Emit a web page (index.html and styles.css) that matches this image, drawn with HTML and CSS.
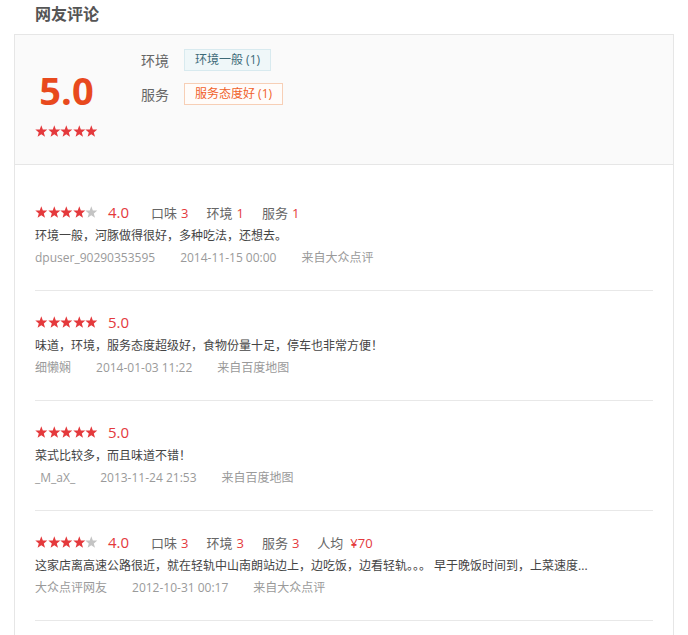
FILE: index.html
```html
<!DOCTYPE html>
<html lang="zh-CN">
<head>
<meta charset="utf-8">
<title>网友评论</title>
<link rel="stylesheet" href="styles.css">
</head>
<body>
<svg class="defs" width="0" height="0" aria-hidden="true">
  <defs>
    <symbol id="star" viewBox="0 2 100 91">
      <polygon points="50,2 62.34,35.01 97.55,36.55 69.97,58.49 79.39,92.45 50,73 20.61,92.45 30.03,58.49 2.45,36.55 37.66,35.01"/>
    </symbol>
  </defs>
</svg>
<div class="page">
  <h2 class="title">网友评论</h2>
  <div class="box">
    <div class="summary">
      <div class="score-col">
        <div class="score">5.0</div>
        <div class="stars">
          <svg class="star on"><use href="#star"/></svg><svg class="star on"><use href="#star"/></svg><svg class="star on"><use href="#star"/></svg><svg class="star on"><use href="#star"/></svg><svg class="star on"><use href="#star"/></svg>
        </div>
      </div>
      <div class="tags">
        <div class="tag-row"><span class="tag-label">环境</span><span class="tag tag-blue">环境一般 (1)</span></div>
        <div class="tag-row"><span class="tag-label">服务</span><span class="tag tag-orange">服务态度好 (1)</span></div>
      </div>
    </div>
    <ul class="reviews">
      <li class="review">
        <div class="r-head">
          <div class="stars">
            <svg class="star on"><use href="#star"/></svg><svg class="star on"><use href="#star"/></svg><svg class="star on"><use href="#star"/></svg><svg class="star on"><use href="#star"/></svg><svg class="star off"><use href="#star"/></svg>
          </div>
          <span class="r-score">4.0</span>
          <span class="dim">口味<span class="dim-val">3</span></span>
          <span class="dim">环境<span class="dim-val">1</span></span>
          <span class="dim">服务<span class="dim-val">1</span></span>
        </div>
        <p class="r-text">环境一般，河豚做得很好，多种吃法，还想去。</p>
        <div class="r-meta"><span>dpuser_90290353595</span><span>2014-11-15 00:00</span><span>来自大众点评</span></div>
      </li>
      <li class="review">
        <div class="r-head">
          <div class="stars">
            <svg class="star on"><use href="#star"/></svg><svg class="star on"><use href="#star"/></svg><svg class="star on"><use href="#star"/></svg><svg class="star on"><use href="#star"/></svg><svg class="star on"><use href="#star"/></svg>
          </div>
          <span class="r-score">5.0</span>
        </div>
        <p class="r-text">味道，环境，服务态度超级好，食物份量十足，停车也非常方便！</p>
        <div class="r-meta"><span>细懒娴</span><span>2014-01-03 11:22</span><span>来自百度地图</span></div>
      </li>
      <li class="review">
        <div class="r-head">
          <div class="stars">
            <svg class="star on"><use href="#star"/></svg><svg class="star on"><use href="#star"/></svg><svg class="star on"><use href="#star"/></svg><svg class="star on"><use href="#star"/></svg><svg class="star on"><use href="#star"/></svg>
          </div>
          <span class="r-score">5.0</span>
        </div>
        <p class="r-text">菜式比较多，而且味道不错！</p>
        <div class="r-meta"><span>_M_aX_</span><span>2013-11-24 21:53</span><span>来自百度地图</span></div>
      </li>
      <li class="review">
        <div class="r-head">
          <div class="stars">
            <svg class="star on"><use href="#star"/></svg><svg class="star on"><use href="#star"/></svg><svg class="star on"><use href="#star"/></svg><svg class="star on"><use href="#star"/></svg><svg class="star off"><use href="#star"/></svg>
          </div>
          <span class="r-score">4.0</span>
          <span class="dim">口味<span class="dim-val">3</span></span>
          <span class="dim">环境<span class="dim-val">3</span></span>
          <span class="dim">服务<span class="dim-val">3</span></span>
          <span class="dim">人均<span class="dim-val dim-price">¥70</span></span>
        </div>
        <p class="r-text">这家店离高速公路很近，就在轻轨中山南朗站边上，边吃饭，边看轻轨。。。 早于晚饭时间到，上菜速度...</p>
        <div class="r-meta"><span>大众点评网友</span><span>2012-10-31 00:17</span><span>来自大众点评</span></div>
      </li>
    </ul>
  </div>
</div>
</body>
</html>
```
FILE: styles.css
```css
html, body {
  margin: 0;
  padding: 0;
  overflow: hidden;
  background: #fff;
}

body {
  font-family: "Open Sans", "Noto Sans CJK SC", sans-serif;
  color: #333;
}

.defs {
  position: absolute;
  width: 0;
  height: 0;
  overflow: hidden;
}

.page {
  padding-left: 14px;
  width: 660px;
}

.title {
  margin: 0;
  height: 34px;
  line-height: 29px;
  padding-left: 21px;
  font-size: 16px;
  font-weight: bold;
  color: #555;
}

.box {
  border: 1px solid #e6e6e6;
  padding-bottom: 40px;
}

.summary {
  display: flex;
  height: 115px;
  padding: 14px 20px 0;
  background: #fafafa;
  border-bottom: 1px solid #e6e6e6;
}

.score-col {
  width: 63px;
  display: flex;
  flex-direction: column;
  align-items: center;
  padding-top: 19px;
}

.score {
  font-size: 38px;
  line-height: 44px;
  font-weight: bold;
  color: #e8491d;
}

.score-col .stars {
  margin-top: 13px;
}

.stars {
  display: flex;
  height: 12px;
}

.star {
  width: 12.6px;
  height: 12px;
}

.star.on {
  fill: #e4393c;
}

.star.off {
  fill: #c4c4c4;
}

.tags {
  margin-left: 43px;
  display: flex;
  flex-direction: column;
  gap: 12px;
}

.tag-row {
  display: flex;
  align-items: center;
  height: 22px;
}

.tag-label {
  width: 43px;
  font-size: 14px;
  color: #666;
}

.tag {
  box-sizing: border-box;
  height: 22px;
  line-height: 20px;
  padding: 0 10px;
  font-size: 12px;
  border: 1px solid;
}

.tag-blue {
  background: #eff7f9;
  border-color: #d8eaef;
  color: #3d6a78;
}

.tag-orange {
  background: #fffcfa;
  border-color: #f7cfb6;
  color: #f0622a;
}

.reviews {
  list-style: none;
  margin: 0;
  padding: 16px 20px 0;
}

.review {
  padding: 18px 0 21px;
  border-bottom: 1px solid #e8e8e8;
}

.r-head {
  display: flex;
  align-items: center;
  height: 26px;
}

.r-head .stars {
  margin-right: 10px;
}

.r-score {
  width: 43px;
  font-size: 15px;
  color: #e4393c;
}

.dim {
  font-size: 13px;
  color: #666;
  margin-right: 18px;
}

.dim-val {
  margin-left: 4px;
  color: #e4393c;
}

.dim-price {
  margin-left: 7px;
}

.r-text {
  margin: 0;
  height: 22px;
  line-height: 22px;
  font-size: 12px;
  color: #444;
  white-space: nowrap;
}

.r-meta {
  display: flex;
  height: 22px;
  line-height: 22px;
  font-size: 12px;
  color: #9a9a9a;
}

.r-meta span {
  margin-right: 25px;
}
```
